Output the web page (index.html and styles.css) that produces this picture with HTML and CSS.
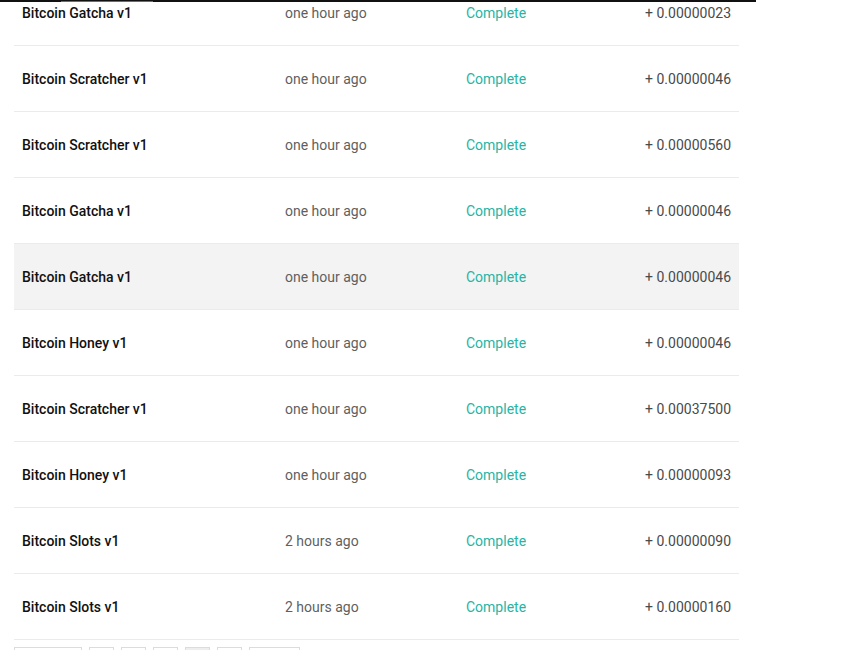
FILE: index.html
```html
<!DOCTYPE html>
<html>
<head>
<meta charset="utf-8">
<link rel="stylesheet" href="styles.css">
</head>
<body>
<div class="topbar"><span class="topbar-accent"></span></div>
<div class="wrap">
  <div class="table">
    <div class="row"><div class="c-name">Bitcoin Gatcha v1</div><div class="c-time">one hour ago</div><div class="c-status">Complete</div><div class="c-amt">+ 0.00000023</div></div>
    <div class="row"><div class="c-name">Bitcoin Scratcher v1</div><div class="c-time">one hour ago</div><div class="c-status">Complete</div><div class="c-amt">+ 0.00000046</div></div>
    <div class="row"><div class="c-name">Bitcoin Scratcher v1</div><div class="c-time">one hour ago</div><div class="c-status">Complete</div><div class="c-amt">+ 0.00000560</div></div>
    <div class="row"><div class="c-name">Bitcoin Gatcha v1</div><div class="c-time">one hour ago</div><div class="c-status">Complete</div><div class="c-amt">+ 0.00000046</div></div>
    <div class="row row-hover"><div class="c-name">Bitcoin Gatcha v1</div><div class="c-time">one hour ago</div><div class="c-status">Complete</div><div class="c-amt">+ 0.00000046</div></div>
    <div class="row"><div class="c-name">Bitcoin Honey v1</div><div class="c-time">one hour ago</div><div class="c-status">Complete</div><div class="c-amt">+ 0.00000046</div></div>
    <div class="row"><div class="c-name">Bitcoin Scratcher v1</div><div class="c-time">one hour ago</div><div class="c-status">Complete</div><div class="c-amt">+ 0.00037500</div></div>
    <div class="row"><div class="c-name">Bitcoin Honey v1</div><div class="c-time">one hour ago</div><div class="c-status">Complete</div><div class="c-amt">+ 0.00000093</div></div>
    <div class="row"><div class="c-name">Bitcoin Slots v1</div><div class="c-time">2 hours ago</div><div class="c-status">Complete</div><div class="c-amt">+ 0.00000090</div></div>
    <div class="row"><div class="c-name">Bitcoin Slots v1</div><div class="c-time">2 hours ago</div><div class="c-status">Complete</div><div class="c-amt">+ 0.00000160</div></div>
  </div>
  <div class="pager">
    <span class="pg pg-wide">Previous</span>
    <span class="pg">1</span>
    <span class="pg">2</span>
    <span class="pg">3</span>
    <span class="pg pg-active">4</span>
    <span class="pg">5</span>
    <span class="pg pg-next">Next</span>
  </div>
</div>
</body>
</html>
```
FILE: styles.css
```css
html, body {
  margin: 0;
  padding: 0;
  background: #fff;
  overflow: hidden;
}
body {
  font-family: Roboto, "Liberation Sans", sans-serif;
  font-size: 14px;
  height: 650px;
}
.topbar {
  position: absolute;
  top: 0;
  left: 0;
  width: 756px;
  height: 2px;
  background: #111;
  z-index: 5;
}
.topbar-accent {
  position: absolute;
  left: 61px;
  top: 1px;
  width: 92px;
  height: 1px;
  background: #e53935;
}
.wrap {
  margin-top: -20px;
  padding-left: 14px;
  width: 725px;
}
.table {
  display: flex;
  flex-direction: column;
}
.row {
  display: grid;
  grid-template-columns: 263px 181px 1fr auto;
  align-items: center;
  height: 65px;
  border-bottom: 1px solid #ebebeb;
  padding: 0 8px;
  box-sizing: content-box;
}
.row-hover { background: #f3f3f3; }
.c-name { color: #111; font-weight: 500; }
.c-time { color: #5f5f5f; }
.c-status { color: #26b5a5; }
.c-amt { color: #4a4a4a; text-align: right; }
.pager {
  display: flex;
  gap: 7px;
  margin-top: 7px;
}
.pg {
  display: inline-block;
  box-sizing: border-box;
  height: 34px;
  width: 25px;
  padding-top: 8px;
  border: 1px solid #dcdcdc;
  color: #333;
  font-size: 13px;
  line-height: 16px;
  text-align: center;
}
.pg-wide { width: 68px; }
.pg-next { width: 51px; }
.pg-active { background: #eee; }
```
